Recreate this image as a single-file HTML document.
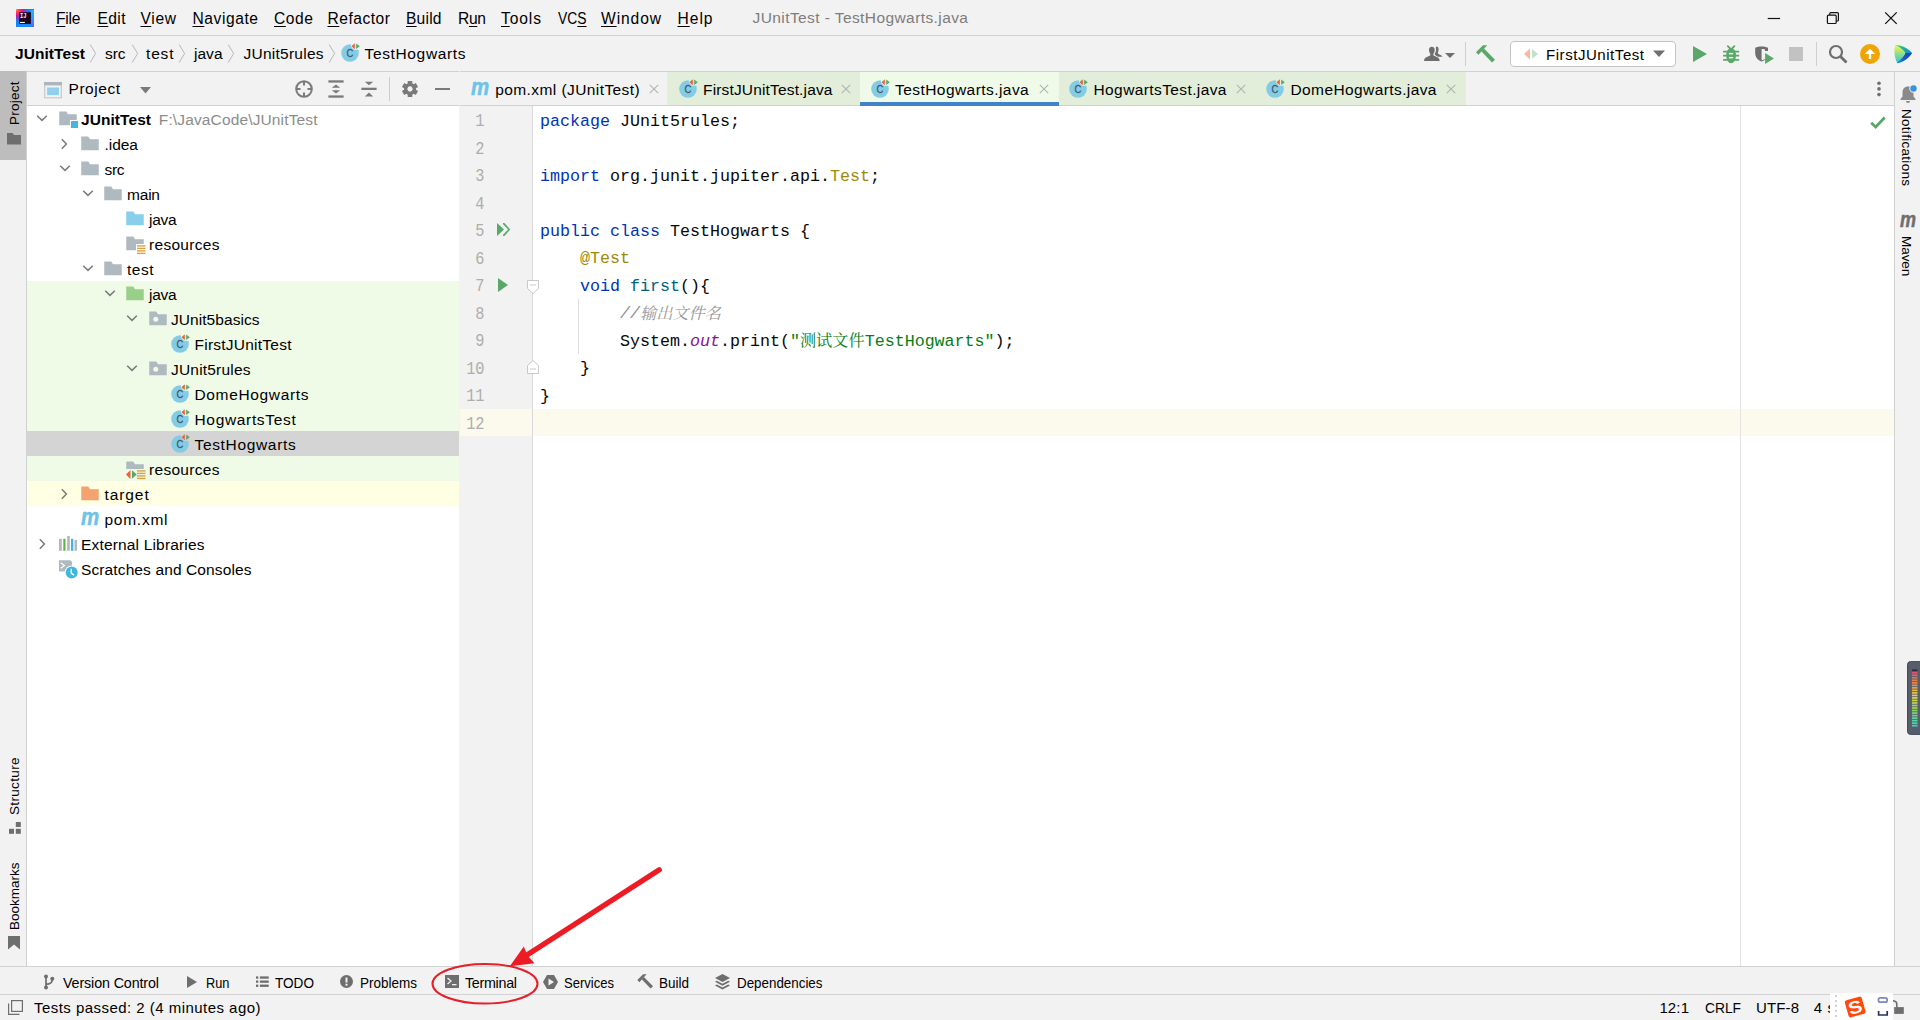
<!DOCTYPE html>
<html><head><meta charset="utf-8"><title>JUnitTest - TestHogwarts.java</title>
<style>
*{box-sizing:border-box;margin:0;padding:0}
html,body{width:1920px;height:1020px;overflow:hidden;background:#f2f2f2}
body{font-family:"Liberation Sans","Noto Sans CJK SC",sans-serif;font-size:15.5px;color:#000;position:relative}
.abs{position:absolute}
.t{position:absolute;white-space:nowrap;line-height:20px}
.hl{position:absolute;height:1px;background:#d1d1d1}
.vl{position:absolute;width:1px;background:#d1d1d1}
u{text-decoration:underline;text-underline-offset:2px;text-decoration-thickness:1px}
svg{position:absolute;overflow:visible}
.code{position:absolute;left:540px;font-family:"Liberation Mono","Noto Sans CJK SC",monospace;font-size:16.667px;line-height:27.5px;white-space:pre;color:#080808}
.ln{position:absolute;left:440px;width:44.500px;text-align:right;font-family:"Liberation Mono",monospace;font-size:18.2px;transform:scaleX(.84);transform-origin:100% 50%;line-height:27.5px;color:#adadad}
.k{color:#0033b3}.an{color:#9e880d}.fn{color:#00627a}.st{color:#067d17}.cm{color:#8c8c8c;font-style:italic}.fi{color:#871094;font-style:italic}
</style></head><body>
<!-- frame -->
<div class="hl" style="left:0;top:35px;width:1920px"></div>
<div class="hl" style="left:0;top:71px;width:1920px"></div>
<div class="abs" style="left:27px;top:106px;width:432px;height:860px;background:#fff"></div>
<div class="abs" style="left:533px;top:106px;width:1361px;height:860px;background:#fff"></div>
<div class="hl" style="left:27px;top:105px;width:1867px"></div>
<div class="abs" style="left:459px;top:71px;width:1px;height:35px;background:#f2f2f2"></div>
<div class="vl" style="left:26px;top:72px;height:894px"></div>
<div class="vl" style="left:1894px;top:72px;height:894px"></div>
<div class="vl" style="left:532px;top:106px;height:860px;background:#d9d9d9"></div>
<div class="vl" style="left:1740px;top:106px;height:860px;background:#e4e4e4"></div>
<div class="hl" style="left:0;top:966px;width:1920px"></div>
<div class="hl" style="left:0;top:994px;width:1920px"></div>
<!-- menu bar -->
<svg style="left:16px;top:9px" width="18" height="18" viewBox="0 0 18 18">
<defs><radialGradient id="ijg" cx="0" cy="0" r="1" gradientUnits="userSpaceOnUse" gradientTransform="translate(0.500 0.500) scale(12)"><stop offset="0" stop-color="#ff9a1e"/><stop offset=".22" stop-color="#ff3a6a"/><stop offset=".5" stop-color="#e0148a"/><stop offset=".8" stop-color="#7a3ad8" stop-opacity=".7"/><stop offset="1" stop-color="#157ffb" stop-opacity="0"/></radialGradient>
<linearGradient id="ijr" x1="0" y1="0" x2="0" y2="1"><stop offset="0" stop-color="#1fb8ff"/><stop offset=".6" stop-color="#3a90ff"/><stop offset="1" stop-color="#6a5cf6"/></linearGradient></defs>
<rect width="18" height="18" fill="#157ffb"/><rect x="14.500" y="1" width="3.500" height="17" fill="url(#ijr)"/><rect x="1" y="15" width="15" height="3" fill="#1a8afc"/>
<rect width="18" height="18" fill="url(#ijg)"/>
<rect x="3.200" y="3.200" width="11.700" height="11.700" fill="#1c0420"/>
<rect x="4" y="12.900" width="4.800" height="1.100" fill="#fff"/>
<text x="3.900" y="9" font-family="Liberation Mono,monospace" font-weight="bold" font-size="6.800" textLength="6.600" lengthAdjust="spacingAndGlyphs" fill="#fff">IJ</text></svg>
<span class="t" style="left:56px;top:9.3px;font-size:15.6px;line-height:20px;letter-spacing:-0.214px;"><u>F</u>ile</span>
<span class="t" style="left:97.5px;top:9.3px;font-size:15.6px;line-height:20px;letter-spacing:0.37px;"><u>E</u>dit</span>
<span class="t" style="left:140.5px;top:9.3px;font-size:15.6px;line-height:20px;letter-spacing:0.656px;"><u>V</u>iew</span>
<span class="t" style="left:192.5px;top:9.3px;font-size:15.6px;line-height:20px;letter-spacing:0.562px;"><u>N</u>avigate</span>
<span class="t" style="left:274px;top:9.3px;font-size:15.6px;line-height:20px;letter-spacing:0.568px;"><u>C</u>ode</span>
<span class="t" style="left:327.5px;top:9.3px;font-size:15.6px;line-height:20px;letter-spacing:0.507px;"><u>R</u>efactor</span>
<span class="t" style="left:406px;top:9.3px;font-size:15.6px;line-height:20px;letter-spacing:0.203px;"><u>B</u>uild</span>
<span class="t" style="left:458px;top:9.3px;font-size:15.6px;line-height:20px;letter-spacing:-0.32px;">R<u>u</u>n</span>
<span class="t" style="left:501px;top:9.3px;font-size:15.6px;line-height:20px;letter-spacing:0.898px;"><u>T</u>ools</span>
<span class="t" style="left:557.5px;top:9.3px;font-size:15.6px;line-height:20px;transform-origin:0 50%;transform:scaleX(0.8885);">VC<u>S</u></span>
<span class="t" style="left:601px;top:9.3px;font-size:15.6px;line-height:20px;letter-spacing:0.906px;"><u>W</u>indow</span>
<span class="t" style="left:677.5px;top:9.3px;font-size:15.6px;line-height:20px;letter-spacing:0.974px;"><u>H</u>elp</span>
<span class="t" style="left:752.5px;top:7.5px;font-size:15.5px;line-height:20px;color:#7d7d7d;letter-spacing:0.415px;">JUnitTest - TestHogwarts.java</span>
<svg style="left:1760px;top:8px" width="150" height="22" viewBox="1760 8 150 22" fill="none" stroke="#111" stroke-width="1.200">
<path d="M1767.700 18.500h12.400"/>
<rect x="1827.400" y="15.200" width="8.800" height="8.300" rx="1"/><path d="M1829.800 15v-1.400q0-.9.900-.9h6.800q.9 0 .9.900v6.500q0 .9-.9.900h-1.300"/>
<path d="M1885.200 12.400l11.500 11.500M1896.700 12.400l-11.500 11.500" stroke-width="1.300"/></svg>
<!-- navigation bar -->
<span class="t" style="left:15px;top:43.5px;font-size:15.5px;line-height:20px;font-weight:bold;letter-spacing:0.064px;">JUnitTest</span>
<span class="t" style="left:105px;top:43.5px;font-size:15.5px;line-height:20px;letter-spacing:-0.086px;">src</span>
<span class="t" style="left:146px;top:43.5px;font-size:15.5px;line-height:20px;letter-spacing:0.839px;">test</span>
<span class="t" style="left:194px;top:43.5px;font-size:15.5px;line-height:20px;letter-spacing:0.021px;">java</span>
<span class="t" style="left:243.5px;top:43.5px;font-size:15.5px;line-height:20px;letter-spacing:0.247px;">JUnit5rules</span>
<span class="t" style="left:364.5px;top:43.5px;font-size:15.5px;line-height:20px;letter-spacing:0.645px;">TestHogwarts</span>
<svg style="left:88.5px;top:44px" width="8" height="19" viewBox="0 0 8 19"><path d="M1.2 0.5l5.4 9-5.4 9" fill="none" stroke="#b3b9be" stroke-width="1"/></svg>
<svg style="left:130.5px;top:44px" width="8" height="19" viewBox="0 0 8 19"><path d="M1.2 0.5l5.4 9-5.4 9" fill="none" stroke="#b3b9be" stroke-width="1"/></svg>
<svg style="left:178px;top:44px" width="8" height="19" viewBox="0 0 8 19"><path d="M1.2 0.5l5.4 9-5.4 9" fill="none" stroke="#b3b9be" stroke-width="1"/></svg>
<svg style="left:227px;top:44px" width="8" height="19" viewBox="0 0 8 19"><path d="M1.2 0.5l5.4 9-5.4 9" fill="none" stroke="#b3b9be" stroke-width="1"/></svg>
<svg style="left:328px;top:44px" width="8" height="19" viewBox="0 0 8 19"><path d="M1.2 0.5l5.4 9-5.4 9" fill="none" stroke="#b3b9be" stroke-width="1"/></svg>
<svg style="left:340.2px;top:42.8px" width="20" height="20" viewBox="0 0 20 20"><circle cx="10" cy="10" r="8.800" fill="#84cbe6"/><text x="0" y="14" text-anchor="middle" transform="translate(9.900 0) scale(.860 1)" font-family="Liberation Sans,sans-serif" font-size="11" fill="#3d5564" stroke="#3d5564" stroke-width="0.250">C</text><path d="M11 -0.5h9.5v7.2h-6.5l-3-3z" fill="#f2f2f2"/><path d="M14.8 0.2v6l-3.4-3z" fill="#e8623c"/><path d="M16.2 0.4v5.6l3.6-2.8z" fill="#59a869"/></svg>
<!-- run toolbar -->
<svg style="left:1422px;top:44px" width="36" height="20" viewBox="1422 44 36 20">
<path d="M1436.500 46.400c1.600 0 2.300 1.300 2.100 3.200-.2 1.700-.8 2.800-.7 3.600.1.900 1.700 1.300 3.200 2.100.8.500 1.200 1 1.300 1.500h-4.500c-.9-.8-2.400-1.300-3-2-.300-.5 0-1.200.4-2 .7-1.300 1-3 .6-4.500-.1-.8.100-1.900.6-1.900z" fill="#6e6e6e"/>
<path d="M1431.800 46.800c2 0 3 1.500 2.900 3.500-.1 1.600-.9 2.900-1.300 3.700-.3.700-.2 1.300.6 1.700 1.500.8 4 1.300 5 2.700.5.700.6 1.600.6 2.500h-15.500c0-.9.100-1.800.6-2.500 1-1.400 3.500-1.900 5-2.700.8-.4.900-1 .6-1.700-.4-.8-1.200-2.100-1.300-3.700-.1-2 .9-3.500 2.800-3.500z" fill="#6e6e6e"/>
<path d="M1445 53h10l-5 5z" fill="#6e6e6e"/></svg>
<div class="vl" style="left:1465px;top:42px;height:24px;background:#cfcfcf"></div>
<svg style="left:1475px;top:44px" width="20" height="20" viewBox="1475 44 20 20" fill="#59a869">
<path d="M1476 52.200l7-6.900h4.200l-8.700 9.500z"/><path d="M1481.300 51.200l2.700-2.700 11 11.200-3 2.800z"/></svg>
<div class="abs" style="left:1510px;top:41px;width:166px;height:26px;background:#fff;border:1px solid #c4c4c4;border-radius:4px"></div>
<svg style="left:1523px;top:46px" width="16" height="16" viewBox="0 0 16 16">
<path d="M7 2.500v11l-6-5.500z" fill="#f4b9a6"/><path d="M9 3v10l6-5z" fill="#c3e0c6"/></svg>
<span class="t" style="left:1546px;top:44.9px;font-size:15.0px;line-height:20px;letter-spacing:0.55px;">FirstJUnitTest</span>
<svg style="left:1653px;top:50px" width="12" height="8" viewBox="0 0 12 8"><path d="M0 0.500h12l-6 6.500z" fill="#6e6e6e"/></svg>
<svg style="left:1692px;top:45px" width="16" height="18" viewBox="0 0 16 18"><path d="M1 1l14 8-14 8z" fill="#59a869"/></svg>
<svg style="left:1721px;top:44px" width="20" height="20" viewBox="1721 44 20 20">
<ellipse cx="1731.100" cy="55.600" rx="4.900" ry="7.600" fill="#59a869"/>
<path d="M1723.800 51.700h14.600M1723.800 55.700h14.600M1723.800 59.800h14.600M1727.800 46.200l3.300 3.300 3.300-3.300" stroke="#59a869" stroke-width="1.800" stroke-linecap="round" fill="none"/>
<rect x="1728.900" y="52.900" width="4.300" height="1.500" fill="#f2f2f2"/><rect x="1728.900" y="56.900" width="4.300" height="1.500" fill="#f2f2f2"/></svg>
<svg style="left:1755px;top:44px" width="20" height="20" viewBox="1755 44 20 20">
<path d="M1755.200 47.800c2-1 4-1.300 6.300-1.300s4.500.3 6.500 1.300v3.200h-3v8c0 1.300-1.500 2-3.500 2.500-3.500-1.200-6.300-4.200-6.300-8.500z" fill="#6e6e6e"/>
<path d="M1761.600 49c1 0 2.200.1 3.400.5v9.300c-.9.700-2 1.200-3.400 1.600z" fill="#f2f2f2"/>
<path d="M1765.100 52.900l8.800 5.500-8.800 5.500z" fill="#59a869"/></svg>
<div class="abs" style="left:1789px;top:47px;width:14px;height:14px;background:#c2c2c2"></div>
<div class="vl" style="left:1816px;top:42px;height:24px;background:#cfcfcf"></div>
<svg style="left:1828px;top:44px" width="20" height="20" viewBox="0 0 20 20"><circle cx="8" cy="8" r="6" fill="none" stroke="#6e6e6e" stroke-width="2.200"/><path d="M12.500 12.500l6 6" stroke="#6e6e6e" stroke-width="2.800"/></svg>
<svg style="left:1860px;top:44px" width="20" height="20" viewBox="0 0 20 20"><circle cx="10" cy="10" r="10" fill="#efa506"/><path d="M10 4.800l5.200 5.300h-4v5h-2.400v-5h-4z" fill="#fff"/></svg>
<svg style="left:1893px;top:44px" width="20" height="20" viewBox="1893 44 20 20">
<defs><linearGradient id="lgA" x1="0" y1="0" x2="0" y2="1"><stop offset="0" stop-color="#f6f84a"/><stop offset=".5" stop-color="#8fdc8a"/><stop offset="1" stop-color="#1fc3dc"/></linearGradient>
<linearGradient id="lgB" x1="0" y1="0" x2="1" y2="1"><stop offset="0" stop-color="#3fe04a"/><stop offset=".5" stop-color="#1fb09a"/><stop offset="1" stop-color="#1a84e6"/></linearGradient>
<linearGradient id="lgC" x1="1" y1="0" x2="0" y2="1"><stop offset="0" stop-color="#1c3fa8"/><stop offset=".6" stop-color="#1560c8"/><stop offset="1" stop-color="#10a0e8"/></linearGradient></defs>
<path d="M1895.200 44.900c7.500.3 13.500 3.600 16.900 8.100h-6.800c-2.300-3.600-6-6.300-10.100-8.100z" fill="url(#lgB)"/>
<path d="M1905.300 53h6.800c-3 5-8 8.800-14.800 10.300l-.5-1.300c3.800-2.300 6.800-5.300 8.500-9z" fill="url(#lgC)"/>
<path d="M1895.200 44.900c4.100 1.800 7.800 4.500 10.100 8.100-1.700 3.700-4.700 6.700-8.500 9l.5 1.300c-2.800-5.800-3.800-12-2.100-18.400z" fill="url(#lgA)"/></svg>
<!-- project tool window header -->
<svg style="left:44px;top:81.500px" width="18" height="16.500" viewBox="0 0 18 16.500">
<rect x="0" y="0" width="18" height="16.400" fill="#c7ced3"/><rect x="1.300" y="3.300" width="15.400" height="11.800" fill="#f1f3f4"/><rect x="0" y="0" width="18" height="3.300" fill="#adb6bd"/><rect x="3.100" y="5.500" width="11.900" height="7.600" fill="#90d0ec"/></svg>
<span class="t" style="left:68.5px;top:79.1px;font-size:15.5px;line-height:20px;letter-spacing:0.542px;">Project</span>
<svg style="left:139.500px;top:87px" width="11" height="7" viewBox="0 0 11 7"><path d="M0 0h11l-5.500 6.500z" fill="#7a7a7a"/></svg>
<svg style="left:294px;top:79px" width="20" height="20" viewBox="0 0 20 20" fill="none" stroke="#7a7a7a" stroke-width="2">
<circle cx="10" cy="10" r="7.800"/><path d="M10 2v4.500M10 18v-4.500M2 10h4.500M18 10h-4.500"/></svg>
<svg style="left:326px;top:79px" width="20" height="20" viewBox="0 0 20 20" fill="#7a7a7a">
<rect x="2.400" y="1.300" width="15.200" height="2.300"/><rect x="2.400" y="16.400" width="15.200" height="2.300"/>
<path d="M10 5.500l4.200 3.200h-8.400zM10 14.500l4.200-3.200h-8.400z"/></svg>
<svg style="left:359px;top:79px" width="20" height="20" viewBox="0 0 20 20" fill="#7a7a7a">
<rect x="2.400" y="8.700" width="15.200" height="2.300"/>
<path d="M10 6.200l4.200-3.500h-8.400zM10 13.600l4.200 3.900h-8.400z"/></svg>
<div class="vl" style="left:389px;top:77px;height:24px;background:#cdcdcd"></div>
<svg style="left:400px;top:79px" width="20" height="20" viewBox="-10 -10 20 20" fill="#7a7a7a">
<path fill-rule="evenodd" d="M0 -6a6 6 0 1 0 .01 0zM0 -2.700a2.700 2.700 0 1 1 -.01 0z"/><rect x="-2.300" y="-8" width="4.600" height="5" transform="rotate(0)"/><rect x="-2.300" y="-8" width="4.600" height="5" transform="rotate(60)"/><rect x="-2.300" y="-8" width="4.600" height="5" transform="rotate(120)"/><rect x="-2.300" y="-8" width="4.600" height="5" transform="rotate(180)"/><rect x="-2.300" y="-8" width="4.600" height="5" transform="rotate(240)"/><rect x="-2.300" y="-8" width="4.600" height="5" transform="rotate(300)"/></svg>
<div class="abs" style="left:435.200px;top:87.600px;width:15.200px;height:2.300px;background:#7a7a7a"></div>
<!-- editor tabs -->
<div class="abs" style="left:667px;top:72px;width:193px;height:33px;background:#e2eeda"></div>
<div class="abs" style="left:1059px;top:72px;width:407px;height:33px;background:#e2eeda"></div>
<div class="abs" style="left:860px;top:72px;width:199px;height:33px;background:#f0fae9"></div>
<div class="abs" style="left:860px;top:102px;width:199px;height:4px;background:#4083c9"></div>
<svg style="left:470.7px;top:82.7px" width="18.2" height="12" viewBox="0 0 18.2 12"><text x="0" y="12" font-family="Liberation Sans,sans-serif" font-style="italic" font-weight="bold" font-size="23.12" textLength="18.2" lengthAdjust="spacingAndGlyphs" fill="#6ec3e8" stroke="#6ec3e8" stroke-width="0.500">m</text></svg>
<span class="t" style="left:495.2px;top:80.1px;font-size:15.5px;line-height:20px;letter-spacing:0.42px;">pom.xml (JUnitTest)</span>
<svg style="left:649px;top:84.2px" width="10" height="10" viewBox="-5 -5 10 10"><path d="M-4.2 -4.2l8.4 8.4M4.2 -4.2l-8.4 8.4" stroke="#b2b2b2" stroke-width="1.1" fill="none"/></svg>
<svg style="left:678px;top:78.5px" width="20" height="20" viewBox="0 0 20 20"><circle cx="10" cy="10" r="8.800" fill="#84cbe6"/><text x="0" y="14" text-anchor="middle" transform="translate(9.900 0) scale(.860 1)" font-family="Liberation Sans,sans-serif" font-size="11" fill="#3d5564" stroke="#3d5564" stroke-width="0.250">C</text><path d="M11 -0.5h9.5v7.2h-6.5l-3-3z" fill="#e2eeda"/><path d="M14.8 0.2v6l-3.4-3z" fill="#e8623c"/><path d="M16.2 0.4v5.6l3.6-2.8z" fill="#59a869"/></svg>
<span class="t" style="left:703px;top:80.1px;font-size:15.5px;line-height:20px;letter-spacing:0.16px;">FirstJUnitTest.java</span>
<svg style="left:841px;top:84.2px" width="10" height="10" viewBox="-5 -5 10 10"><path d="M-4.2 -4.2l8.4 8.4M4.2 -4.2l-8.4 8.4" stroke="#b2b2b2" stroke-width="1.1" fill="none"/></svg>
<svg style="left:870px;top:78.5px" width="20" height="20" viewBox="0 0 20 20"><circle cx="10" cy="10" r="8.800" fill="#84cbe6"/><text x="0" y="14" text-anchor="middle" transform="translate(9.900 0) scale(.860 1)" font-family="Liberation Sans,sans-serif" font-size="11" fill="#3d5564" stroke="#3d5564" stroke-width="0.250">C</text><path d="M11 -0.5h9.5v7.2h-6.5l-3-3z" fill="#f0fae9"/><path d="M14.8 0.2v6l-3.4-3z" fill="#e8623c"/><path d="M16.2 0.4v5.6l3.6-2.8z" fill="#59a869"/></svg>
<span class="t" style="left:895px;top:80.1px;font-size:15.5px;line-height:20px;letter-spacing:0.441px;">TestHogwarts.java</span>
<svg style="left:1039px;top:84.2px" width="10" height="10" viewBox="-5 -5 10 10"><path d="M-4.2 -4.2l8.4 8.4M4.2 -4.2l-8.4 8.4" stroke="#b2b2b2" stroke-width="1.1" fill="none"/></svg>
<svg style="left:1068px;top:78.5px" width="20" height="20" viewBox="0 0 20 20"><circle cx="10" cy="10" r="8.800" fill="#84cbe6"/><text x="0" y="14" text-anchor="middle" transform="translate(9.900 0) scale(.860 1)" font-family="Liberation Sans,sans-serif" font-size="11" fill="#3d5564" stroke="#3d5564" stroke-width="0.250">C</text><path d="M11 -0.5h9.5v7.2h-6.5l-3-3z" fill="#e2eeda"/><path d="M14.8 0.2v6l-3.4-3z" fill="#e8623c"/><path d="M16.2 0.4v5.6l3.6-2.8z" fill="#59a869"/></svg>
<span class="t" style="left:1093.5px;top:80.1px;font-size:15.5px;line-height:20px;letter-spacing:0.397px;">HogwartsTest.java</span>
<svg style="left:1236px;top:84.2px" width="10" height="10" viewBox="-5 -5 10 10"><path d="M-4.2 -4.2l8.4 8.4M4.2 -4.2l-8.4 8.4" stroke="#b2b2b2" stroke-width="1.1" fill="none"/></svg>
<svg style="left:1265px;top:78.5px" width="20" height="20" viewBox="0 0 20 20"><circle cx="10" cy="10" r="8.800" fill="#84cbe6"/><text x="0" y="14" text-anchor="middle" transform="translate(9.900 0) scale(.860 1)" font-family="Liberation Sans,sans-serif" font-size="11" fill="#3d5564" stroke="#3d5564" stroke-width="0.250">C</text><path d="M11 -0.5h9.5v7.2h-6.5l-3-3z" fill="#e2eeda"/><path d="M14.8 0.2v6l-3.4-3z" fill="#e8623c"/><path d="M16.2 0.4v5.6l3.6-2.8z" fill="#59a869"/></svg>
<span class="t" style="left:1290.5px;top:80.1px;font-size:15.5px;line-height:20px;letter-spacing:0.402px;">DomeHogwarts.java</span>
<svg style="left:1446px;top:84.2px" width="10" height="10" viewBox="-5 -5 10 10"><path d="M-4.2 -4.2l8.4 8.4M4.2 -4.2l-8.4 8.4" stroke="#b2b2b2" stroke-width="1.1" fill="none"/></svg>
<svg style="left:1877px;top:81px" width="4" height="17" viewBox="0 0 4 17" fill="#6e6e6e"><circle cx="2" cy="2.200" r="1.800"/><circle cx="2" cy="7.900" r="1.800"/><circle cx="2" cy="13.600" r="1.800"/></svg>
<!-- project tree -->
<div class="abs" style="left:27px;top:281px;width:432px;height:200px;background:#effae7"></div>
<div class="abs" style="left:27px;top:431px;width:432px;height:25px;background:#d4d4d4"></div>
<div class="abs" style="left:27px;top:481px;width:432px;height:25px;background:#ffffe4"></div>
<svg style="left:34.8px;top:113px" width="14" height="10" viewBox="-7 -5 14 10"><path d="M-4.8 -2.2l4.8 4.6 4.8-4.6" fill="none" stroke="#7a7a7a" stroke-width="1.5"/></svg>
<svg style="left:58px;top:109.1px" width="20" height="20" viewBox="0 0 16 16"><path d="M1 2h5.6l1.4 2.2h7v8.8h-14z" fill="#aeb9c0"/></svg>
<div class="abs" style="left:69.5px;top:119.89999999999999px;width:9.500px;height:9.500px;background:#fff"></div>
<div class="abs" style="left:70.5px;top:120.89999999999999px;width:7.500px;height:7.500px;background:#40b6e0"></div>
<span class="t" style="left:81px;top:109.7px;font-size:15.5px;line-height:20px;font-weight:bold;letter-spacing:0.064px;">JUnitTest</span>
<span class="t" style="left:158.8px;top:109.7px;font-size:15.5px;line-height:20px;color:#8c8c8c;letter-spacing:0.138px;">F:\JavaCode\JUnitTest</span>
<svg style="left:59.0px;top:136.5px" width="10" height="14" viewBox="-5 -7 10 14"><path d="M-2.2 -4.8l4.6 4.8-4.6 4.8" fill="none" stroke="#7a7a7a" stroke-width="1.5"/></svg>
<svg style="left:80px;top:134.1px" width="20" height="20" viewBox="0 0 16 16"><path d="M1 2h5.6l1.4 2.2h7v8.8h-14z" fill="#aeb9c0"/></svg>
<span class="t" style="left:104.5px;top:134.7px;font-size:15.5px;line-height:20px;letter-spacing:-0.031px;">.idea</span>
<svg style="left:58.2px;top:163px" width="14" height="10" viewBox="-7 -5 14 10"><path d="M-4.8 -2.2l4.8 4.6 4.8-4.6" fill="none" stroke="#7a7a7a" stroke-width="1.5"/></svg>
<svg style="left:80px;top:159.1px" width="20" height="20" viewBox="0 0 16 16"><path d="M1 2h5.6l1.4 2.2h7v8.8h-14z" fill="#aeb9c0"/></svg>
<span class="t" style="left:104.5px;top:159.7px;font-size:15.5px;line-height:20px;letter-spacing:-0.336px;">src</span>
<svg style="left:80.5px;top:188px" width="14" height="10" viewBox="-7 -5 14 10"><path d="M-4.8 -2.2l4.8 4.6 4.8-4.6" fill="none" stroke="#7a7a7a" stroke-width="1.5"/></svg>
<svg style="left:102.7px;top:184.1px" width="20" height="20" viewBox="0 0 16 16"><path d="M1 2h5.6l1.4 2.2h7v8.8h-14z" fill="#aeb9c0"/></svg>
<span class="t" style="left:127px;top:184.7px;font-size:15.5px;line-height:20px;letter-spacing:-0.203px;">main</span>
<svg style="left:125px;top:209.1px" width="20" height="20" viewBox="0 0 16 16"><path d="M1 2h5.6l1.4 2.2h7v8.8h-14z" fill="#87cfea"/></svg>
<span class="t" style="left:149px;top:209.7px;font-size:15.5px;line-height:20px;letter-spacing:-0.312px;">java</span>
<svg style="left:125px;top:234.1px" width="20" height="20" viewBox="0 0 16 16"><path d="M1 2h5.6l1.4 2.2h7v8.8h-14z" fill="#aeb9c0"/></svg>
<div class="abs" style="left:135.5px;top:243.79999999999998px;width:10.500px;height:11px;background:#fff"></div>
<svg style="left:136.8px;top:244.79999999999998px" width="8.500" height="9.500" viewBox="0 0 8.500 9.500" fill="#d9a343"><rect x="0" y="0.200" width="8.500" height="1.400"/><rect x="0" y="2.700" width="8.500" height="1.400"/><rect x="0" y="5.200" width="8.500" height="1.400"/><rect x="0" y="7.700" width="8.500" height="1.400"/></svg>
<span class="t" style="left:149px;top:234.7px;font-size:15.5px;line-height:20px;letter-spacing:0.305px;">resources</span>
<svg style="left:80.5px;top:263px" width="14" height="10" viewBox="-7 -5 14 10"><path d="M-4.8 -2.2l4.8 4.6 4.8-4.6" fill="none" stroke="#7a7a7a" stroke-width="1.5"/></svg>
<svg style="left:102.7px;top:259.1px" width="20" height="20" viewBox="0 0 16 16"><path d="M1 2h5.6l1.4 2.2h7v8.8h-14z" fill="#aeb9c0"/></svg>
<span class="t" style="left:127px;top:259.7px;font-size:15.5px;line-height:20px;letter-spacing:0.505px;">test</span>
<svg style="left:103px;top:288px" width="14" height="10" viewBox="-7 -5 14 10"><path d="M-4.8 -2.2l4.8 4.6 4.8-4.6" fill="none" stroke="#7a7a7a" stroke-width="1.5"/></svg>
<svg style="left:125px;top:284.1px" width="20" height="20" viewBox="0 0 16 16"><path d="M1 2h5.6l1.4 2.2h7v8.8h-14z" fill="#98d08a"/></svg>
<span class="t" style="left:149px;top:284.7px;font-size:15.5px;line-height:20px;letter-spacing:-0.312px;">java</span>
<svg style="left:125.30000000000001px;top:313px" width="14" height="10" viewBox="-7 -5 14 10"><path d="M-4.8 -2.2l4.8 4.6 4.8-4.6" fill="none" stroke="#7a7a7a" stroke-width="1.5"/></svg>
<svg style="left:147.7px;top:309.1px" width="20" height="20" viewBox="0 0 16 16"><path d="M1 2h5.600l1.400 2.200h7v8.800h-14z" fill="#aeb9c0"/><circle cx="6.200" cy="8.100" r="2" fill="#effae7"/></svg>
<span class="t" style="left:171px;top:309.7px;font-size:15.5px;line-height:20px;letter-spacing:0.057px;">JUnit5basics</span>
<svg style="left:170px;top:334px" width="20" height="20" viewBox="0 0 20 20"><circle cx="10" cy="10" r="8.800" fill="#84cbe6"/><text x="0" y="14" text-anchor="middle" transform="translate(9.900 0) scale(.860 1)" font-family="Liberation Sans,sans-serif" font-size="11" fill="#3d5564" stroke="#3d5564" stroke-width="0.250">C</text><path d="M11 -0.5h9.5v7.2h-6.5l-3-3z" fill="#effae7"/><path d="M14.8 0.2v6l-3.4-3z" fill="#e8623c"/><path d="M16.2 0.4v5.6l3.6-2.8z" fill="#59a869"/></svg>
<span class="t" style="left:194.5px;top:334.7px;font-size:15.5px;line-height:20px;letter-spacing:0.24px;">FirstJUnitTest</span>
<svg style="left:125.30000000000001px;top:363px" width="14" height="10" viewBox="-7 -5 14 10"><path d="M-4.8 -2.2l4.8 4.6 4.8-4.6" fill="none" stroke="#7a7a7a" stroke-width="1.5"/></svg>
<svg style="left:147.7px;top:359.1px" width="20" height="20" viewBox="0 0 16 16"><path d="M1 2h5.600l1.400 2.200h7v8.800h-14z" fill="#aeb9c0"/><circle cx="6.200" cy="8.100" r="2" fill="#effae7"/></svg>
<span class="t" style="left:171px;top:359.7px;font-size:15.5px;line-height:20px;letter-spacing:0.197px;">JUnit5rules</span>
<svg style="left:170px;top:384px" width="20" height="20" viewBox="0 0 20 20"><circle cx="10" cy="10" r="8.800" fill="#84cbe6"/><text x="0" y="14" text-anchor="middle" transform="translate(9.900 0) scale(.860 1)" font-family="Liberation Sans,sans-serif" font-size="11" fill="#3d5564" stroke="#3d5564" stroke-width="0.250">C</text><path d="M11 -0.5h9.5v7.2h-6.5l-3-3z" fill="#effae7"/><path d="M14.8 0.2v6l-3.4-3z" fill="#e8623c"/><path d="M16.2 0.4v5.6l3.6-2.8z" fill="#59a869"/></svg>
<span class="t" style="left:194.5px;top:384.7px;font-size:15.5px;line-height:20px;letter-spacing:0.653px;">DomeHogwarts</span>
<svg style="left:170px;top:409px" width="20" height="20" viewBox="0 0 20 20"><circle cx="10" cy="10" r="8.800" fill="#84cbe6"/><text x="0" y="14" text-anchor="middle" transform="translate(9.900 0) scale(.860 1)" font-family="Liberation Sans,sans-serif" font-size="11" fill="#3d5564" stroke="#3d5564" stroke-width="0.250">C</text><path d="M11 -0.5h9.5v7.2h-6.5l-3-3z" fill="#effae7"/><path d="M14.8 0.2v6l-3.4-3z" fill="#e8623c"/><path d="M16.2 0.4v5.6l3.6-2.8z" fill="#59a869"/></svg>
<span class="t" style="left:194.5px;top:409.7px;font-size:15.5px;line-height:20px;letter-spacing:0.663px;">HogwartsTest</span>
<svg style="left:170px;top:434px" width="20" height="20" viewBox="0 0 20 20"><circle cx="10" cy="10" r="8.800" fill="#84cbe6"/><text x="0" y="14" text-anchor="middle" transform="translate(9.900 0) scale(.860 1)" font-family="Liberation Sans,sans-serif" font-size="11" fill="#3d5564" stroke="#3d5564" stroke-width="0.250">C</text><path d="M11 -0.5h9.5v7.2h-6.5l-3-3z" fill="#d4d4d4"/><path d="M14.8 0.2v6l-3.4-3z" fill="#e8623c"/><path d="M16.2 0.4v5.6l3.6-2.8z" fill="#59a869"/></svg>
<span class="t" style="left:194.5px;top:434.7px;font-size:15.5px;line-height:20px;letter-spacing:0.663px;">TestHogwarts</span>
<svg style="left:125px;top:459.1px" width="20" height="20" viewBox="0 0 16 16"><path d="M1 2h5.6l1.4 2.2h7v8.8h-14z" fill="#aeb9c0"/></svg>
<div class="abs" style="left:125px;top:468.8px;width:21px;height:11px;background:#effae7"></div>
<svg style="left:136.8px;top:469.8px" width="8.500" height="9.500" viewBox="0 0 8.500 9.500" fill="#d9a343"><rect x="0" y="0.200" width="8.500" height="1.400"/><rect x="0" y="2.700" width="8.500" height="1.400"/><rect x="0" y="5.200" width="8.500" height="1.400"/><rect x="0" y="7.700" width="8.500" height="1.400"/></svg>
<svg style="left:125.5px;top:469.6px" width="11" height="9" viewBox="0 0 11 9"><path d="M4.500 0v9l-4.500-4.500z" fill="#e8623c"/><path d="M6 0.300v8.400l4.800-4.200z" fill="#59a869"/></svg>
<span class="t" style="left:149px;top:459.7px;font-size:15.5px;line-height:20px;letter-spacing:0.305px;">resources</span>
<svg style="left:59.0px;top:486.5px" width="10" height="14" viewBox="-5 -7 10 14"><path d="M-2.2 -4.8l4.6 4.8-4.6 4.8" fill="none" stroke="#7a7a7a" stroke-width="1.5"/></svg>
<svg style="left:80px;top:484.1px" width="20" height="20" viewBox="0 0 16 16"><path d="M1 2h5.6l1.4 2.2h7v8.8h-14z" fill="#f4a26f"/></svg>
<span class="t" style="left:104.5px;top:484.7px;font-size:15.5px;line-height:20px;letter-spacing:0.912px;">target</span>
<svg style="left:80.7px;top:512.7px" width="18.2" height="12" viewBox="0 0 18.2 12"><text x="0" y="12" font-family="Liberation Sans,sans-serif" font-style="italic" font-weight="bold" font-size="23.12" textLength="18.2" lengthAdjust="spacingAndGlyphs" fill="#6ec3e8" stroke="#6ec3e8" stroke-width="0.500">m</text></svg>
<span class="t" style="left:104.5px;top:509.7px;font-size:15.5px;line-height:20px;letter-spacing:0.737px;">pom.xml</span>
<svg style="left:36.5px;top:536.5px" width="10" height="14" viewBox="-5 -7 10 14"><path d="M-2.2 -4.8l4.6 4.8-4.6 4.8" fill="none" stroke="#7a7a7a" stroke-width="1.5"/></svg>
<svg style="left:58px;top:534px" width="20" height="20" viewBox="0 0 20 20">
<rect x="1" y="4.800" width="2.800" height="12" fill="#aeb9c0"/><rect x="5.300" y="4.800" width="2.200" height="12" fill="#62b543"/>
<rect x="9.200" y="2" width="2.600" height="14.800" fill="#aeb9c0"/><rect x="13" y="4.800" width="2.300" height="12" fill="#40b6e0"/><rect x="16.500" y="6" width="2.500" height="10.800" fill="#aeb9c0"/></svg>
<span class="t" style="left:81px;top:534.7px;font-size:15.5px;line-height:20px;letter-spacing:0.17px;">External Libraries</span>
<svg style="left:58px;top:559px" width="22" height="22" viewBox="0 0 22 22">
<path d="M1 1.300h11.500l1.500 1.500v9.700h-13z" fill="#aeb9c0"/><path d="M2.800 3.800l3.600 2.700-3.600 2.700" fill="none" stroke="#fff" stroke-width="1.200"/>
<circle cx="13.700" cy="13.500" r="7" fill="#fff"/><circle cx="13.700" cy="13.500" r="6" fill="#40b6e0"/><path d="M13.200 9.800v4.400l2.800 1.900" fill="none" stroke="#fff" stroke-width="1.400"/></svg>
<span class="t" style="left:81px;top:559.7px;font-size:15.5px;line-height:20px;letter-spacing:0.118px;">Scratches and Consoles</span>
<!-- editor -->
<div class="abs" style="left:460px;top:409px;width:72px;height:27px;background:#fcfaed"></div>
<div class="abs" style="left:533px;top:409px;width:1207px;height:27px;background:#fcfaed"></div>
<div class="abs" style="left:1741px;top:409px;width:153px;height:27px;background:#fcfaed"></div>
<div class="vl" style="left:578px;top:299px;height:55px;background:#dcdcdc"></div>
<div class="ln" style="top:108.1px">1</div>
<div class="code" style="top:107.6px"><span class="k">package</span> JUnit5rules;</div>
<div class="ln" style="top:135.6px">2</div>
<div class="ln" style="top:163.1px">3</div>
<div class="code" style="top:162.6px"><span class="k">import</span> org.junit.jupiter.api.<span class="an">Test</span>;</div>
<div class="ln" style="top:190.6px">4</div>
<div class="ln" style="top:218.1px">5</div>
<div class="code" style="top:217.6px"><span class="k">public class</span> TestHogwarts {</div>
<div class="ln" style="top:245.6px">6</div>
<div class="code" style="top:245.1px">    <span class="an">@Test</span></div>
<div class="ln" style="top:273.1px">7</div>
<div class="code" style="top:272.6px">    <span class="k">void</span> <span class="fn">first</span>(){</div>
<div class="ln" style="top:300.6px">8</div>
<div class="code" style="top:300.1px">        <span class="cm">//<span style="font-family:'Noto Serif CJK SC',serif;font-size:16.200px;line-height:0;position:relative;top:1px;color:#969696">输出文件名</span></span></div>
<div class="ln" style="top:328.1px">9</div>
<div class="code" style="top:327.6px">        System.<span class="fi">out</span>.print(<span class="st">"<span style="font-family:'Noto Serif CJK SC',serif;font-size:16.200px;line-height:0">测试文件</span>TestHogwarts"</span>);</div>
<div class="ln" style="top:355.6px">10</div>
<div class="code" style="top:355.1px">    }</div>
<div class="ln" style="top:383.1px">11</div>
<div class="code" style="top:382.6px">}</div>
<div class="ln" style="top:410.6px">12</div>
<svg style="left:496.800px;top:223px" width="14" height="13" viewBox="0 0 14 13" fill="#59a869"><path d="M0 0l7 6.500-7 6.500z"/><path d="M6 0h1.400l5.800 6.500-5.800 6.500h-1.400v-1.200l5.200-5.300-5.200-5.300z"/></svg>
<svg style="left:498px;top:277.700px" width="10" height="14" viewBox="0 0 10 14" fill="#59a869"><path d="M0 0l10 7-10 7z"/></svg>
<svg style="left:526.500px;top:280px" width="12" height="14" viewBox="0 0 12 14"><path d="M0.500 0.500h11v8l-5.500 5-5.500-5z" fill="#fff" stroke="#c9c9c9" stroke-width="1"/><path d="M3 5h6" stroke="#c9c9c9" stroke-width="1"/></svg>
<svg style="left:526.500px;top:360px" width="12" height="14" viewBox="0 0 12 14"><path d="M0.500 13.500h11v-8l-5.500-5-5.500 5z" fill="#fff" stroke="#c9c9c9" stroke-width="1"/><path d="M3 9h6" stroke="#c9c9c9" stroke-width="1"/></svg>
<svg style="left:1870px;top:116px" width="16" height="13" viewBox="0 0 16 13"><path d="M1.200 6.800l4.500 4.200 9-9.500" fill="none" stroke="#59a869" stroke-width="2.800"/></svg>
<!-- left tool strip -->
<div class="abs" style="left:0;top:71px;width:26px;height:89px;background:#bdbdbd"></div>
<span class="t" style="left:5.199999999999999px;top:124.5px;font-size:13.5px;line-height:20px;letter-spacing:0.245px;transform-origin:0 0;transform:rotate(-90deg);">Project</span>
<svg style="left:7px;top:132.500px" width="14" height="12" viewBox="0 0 14 12"><path d="M0 0h5.500l1.500 2h7v9.500h-14z" fill="#6e6e6e"/></svg>
<span class="t" style="left:5.199999999999999px;top:814.5px;font-size:13.5px;line-height:20px;letter-spacing:0.34px;transform-origin:0 0;transform:rotate(-90deg);">Structure</span>
<svg style="left:8.500px;top:822px" width="12" height="12" viewBox="0 0 12 12" fill="#6e6e6e"><rect x="6.800" y="0" width="5" height="5"/><rect x="0" y="6.800" width="5" height="5"/><rect x="6.800" y="6.800" width="5" height="5"/></svg>
<span class="t" style="left:5.199999999999999px;top:930.0px;font-size:13.5px;line-height:20px;letter-spacing:-0.004px;transform-origin:0 0;transform:rotate(-90deg);">Bookmarks</span>
<svg style="left:8.200px;top:936px" width="12" height="14" viewBox="0 0 12 14"><path d="M0 0h12v13.500l-6-5-6 5z" fill="#6e6e6e"/></svg>
<!-- right tool strip -->
<svg style="left:1900px;top:84px" width="18" height="19" viewBox="0 0 18 19">
<path d="M8 2.500c3.500 0 5.500 2.600 5.500 6v4l2 2.500v1h-15v-1l2-2.500v-4c0-3.400 2-6 5.500-6z" fill="#8a8a8a"/><path d="M6 17h4a2 2 0 0 1-4 0z" fill="#8a8a8a"/>
<circle cx="13.500" cy="4.500" r="4.200" fill="#f2f2f2"/><circle cx="13.500" cy="4.500" r="3.200" fill="#3592e4"/></svg>
<span class="t" style="left:1916px;top:109.0px;font-size:13.5px;line-height:20px;letter-spacing:0.288px;transform-origin:0 0;transform:rotate(90deg);">Notifications</span>
<svg style="left:1900px;top:215.3px" width="16" height="11.5" viewBox="0 0 16 11.5"><text x="0" y="11.5" font-family="Liberation Sans,sans-serif" font-style="italic" font-weight="bold" font-size="22.16" textLength="16" lengthAdjust="spacingAndGlyphs" fill="#6e6e6e" stroke="#6e6e6e" stroke-width="0.500">m</text></svg>
<span class="t" style="left:1916px;top:236.0px;font-size:13.5px;line-height:20px;letter-spacing:-0.058px;transform-origin:0 0;transform:rotate(90deg);">Maven</span>
<svg style="left:1906px;top:660px" width="14" height="76" viewBox="1906 660 14 76">
<rect x="1907.500" y="661.600" width="16" height="72.800" rx="3" fill="#585d6c" stroke="#454a58"/><rect x="1912" y="669.400" width="5.500" height="1.700" fill="#2b2e38"/><rect x="1912" y="671.90" width="5.500" height="1.700" fill="#e0566a"/><rect x="1912" y="674.42" width="5.500" height="1.700" fill="#e16260"/><rect x="1912" y="676.94" width="5.500" height="1.700" fill="#e36f56"/><rect x="1912" y="679.46" width="5.500" height="1.700" fill="#e57c4c"/><rect x="1912" y="681.98" width="5.500" height="1.700" fill="#e78942"/><rect x="1912" y="684.50" width="5.500" height="1.700" fill="#e89741"/><rect x="1912" y="687.02" width="5.500" height="1.700" fill="#e8a642"/><rect x="1912" y="689.54" width="5.500" height="1.700" fill="#e8b444"/><rect x="1912" y="692.06" width="5.500" height="1.700" fill="#e8c345"/><rect x="1912" y="694.58" width="5.500" height="1.700" fill="#e8d147"/><rect x="1912" y="697.10" width="5.500" height="1.700" fill="#ded74a"/><rect x="1912" y="699.62" width="5.500" height="1.700" fill="#ccd750"/><rect x="1912" y="702.14" width="5.500" height="1.700" fill="#bbd755"/><rect x="1912" y="704.66" width="5.500" height="1.700" fill="#a9d65a"/><rect x="1912" y="707.18" width="5.500" height="1.700" fill="#98d660"/><rect x="1912" y="709.70" width="5.500" height="1.700" fill="#87d668"/><rect x="1912" y="712.22" width="5.500" height="1.700" fill="#7ad676"/><rect x="1912" y="714.74" width="5.500" height="1.700" fill="#6dd685"/><rect x="1912" y="717.26" width="5.500" height="1.700" fill="#60d694"/><rect x="1912" y="719.78" width="5.500" height="1.700" fill="#52d6a2"/><rect x="1912" y="722.30" width="5.500" height="1.700" fill="#45d6b1"/><rect x="1912" y="724.82" width="5.500" height="1.700" fill="#38d6c0"/></svg>
<!-- bottom tool window bar -->
<span class="t" style="left:63px;top:973.4px;font-size:14.3px;line-height:20px;letter-spacing:-0.125px;">Version Control</span>
<span class="t" style="left:206px;top:973.4px;font-size:14.3px;line-height:20px;transform-origin:0 50%;transform:scaleX(0.8958);">Run</span>
<span class="t" style="left:274.5px;top:973.4px;font-size:14.3px;line-height:20px;transform-origin:0 50%;transform:scaleX(0.9501);">TODO</span>
<span class="t" style="left:360px;top:973.4px;font-size:14.3px;line-height:20px;transform-origin:0 50%;transform:scaleX(0.9439);">Problems</span>
<span class="t" style="left:465px;top:973.4px;font-size:14.3px;line-height:20px;letter-spacing:-0.29px;">Terminal</span>
<span class="t" style="left:564px;top:973.4px;font-size:14.3px;line-height:20px;transform-origin:0 50%;transform:scaleX(0.9119);">Services</span>
<span class="t" style="left:659px;top:973.4px;font-size:14.3px;line-height:20px;transform-origin:0 50%;transform:scaleX(0.9435);">Build</span>
<span class="t" style="left:736.5px;top:973.4px;font-size:14.3px;line-height:20px;transform-origin:0 50%;transform:scaleX(0.9352);">Dependencies</span>
<svg style="left:43px;top:974px" width="12" height="16" viewBox="43 974 12 16" fill="none" stroke="#6e6e6e" stroke-width="1.700">
<path d="M46 976.500v11M46 984.300c5 0 6.300-1.800 6.300-5.500"/><circle cx="46" cy="976.500" r="2" fill="#6e6e6e" stroke="none"/><circle cx="46" cy="987.600" r="2" fill="#6e6e6e" stroke="none"/><circle cx="52.300" cy="978.700" r="2" fill="#6e6e6e" stroke="none"/></svg>
<svg style="left:187.300px;top:976.300px" width="10" height="12" viewBox="0 0 10 12"><path d="M0 0l10 6-10 6z" fill="#6e6e6e"/></svg>
<svg style="left:256px;top:976px" width="13" height="12" viewBox="0 0 13 12" fill="#6e6e6e">
<rect x="0" y="0.400" width="2.300" height="2.300"/><rect x="3.900" y="0.400" width="8.800" height="2.300"/><rect x="0" y="4.500" width="2.300" height="2.300"/><rect x="3.900" y="4.500" width="8.800" height="2.300"/><rect x="0" y="8.600" width="2.300" height="2.300"/><rect x="3.900" y="8.600" width="8.800" height="2.300"/></svg>
<svg style="left:340.300px;top:974.700px" width="13" height="13" viewBox="0 0 13 13"><circle cx="6.500" cy="6.500" r="6.500" fill="#6e6e6e"/><rect x="5.500" y="2.500" width="2" height="5" fill="#f2f2f2"/><rect x="5.500" y="8.700" width="2" height="2" fill="#f2f2f2"/></svg>
<svg style="left:445px;top:974.700px" width="14" height="13" viewBox="0 0 14 13"><rect width="14" height="13" fill="#6e6e6e"/><path d="M2.500 3l3.500 3-3.500 3" fill="none" stroke="#f2f2f2" stroke-width="1.300"/><rect x="7" y="9" width="4.500" height="1.300" fill="#f2f2f2"/></svg>
<svg style="left:542.500px;top:975px" width="15" height="14" viewBox="0 0 15 14"><path d="M4 0h7l4 7-4 7h-7l-4-7z" fill="#6e6e6e"/><path d="M5.500 3.500l5.500 3.500-5.500 3.500z" fill="#f2f2f2"/></svg>
<svg style="left:637px;top:974px" width="17" height="16" viewBox="637 974 17 16" fill="#6e6e6e"><g transform="translate(637.300 974.300) scale(.830) translate(-1476 -45.300)">
<path d="M1476 52.200l7-6.900h4.200l-8.700 9.500z"/><path d="M1481.300 51.200l2.700-2.700 11 11.200-3 2.800z"/></g></svg>
<svg style="left:715px;top:974px" width="15" height="16" viewBox="0 0 15 16" fill="#6e6e6e"><path d="M7.500 0l7.500 4-7.500 4-7.500-4z"/><path d="M1.800 6.800l5.700 3 5.700-3 1.800 1-7.500 4-7.500-4z"/><path d="M1.800 10.600l5.700 3 5.700-3 1.800 1-7.500 4-7.500-4z"/></svg>
<!-- status bar -->
<svg style="left:7.500px;top:1000px" width="15" height="15" viewBox="0 0 15 15" fill="none" stroke="#6e6e6e" stroke-width="1.200"><rect x="3.600" y="0.600" width="10.800" height="10.800"/><path d="M0.600 3.500v10.900h10.900"/></svg>
<span class="t" style="left:34px;top:997.5px;font-size:15.0px;line-height:20px;letter-spacing:0.463px;">Tests passed: 2 (4 minutes ago)</span>
<span class="t" style="left:1659.4px;top:997.5px;font-size:15.0px;line-height:20px;letter-spacing:0.132px;">12:1</span>
<span class="t" style="left:1705px;top:997.5px;font-size:15.0px;line-height:20px;transform-origin:0 50%;transform:scaleX(0.919);">CRLF</span>
<span class="t" style="left:1756px;top:997.5px;font-size:15.0px;line-height:20px;letter-spacing:0.125px;">UTF-8</span>
<span class="t" style="left:1813.8px;top:997.5px;font-size:15px;line-height:20px;letter-spacing:.6px">4 spaces</span>
<svg style="left:1890px;top:999px" width="16" height="16" viewBox="1890 999 16 16"><path d="M1890.500 1002.500c1.500-2.300 6.300-2.300 6.300 1.500v3.500" fill="none" stroke="#6e6e6e" stroke-width="1.600"/><rect x="1894.200" y="1007.100" width="9.600" height="6.800" fill="#6e6e6e"/></svg>
<div class="abs" style="left:1830px;top:993px;width:63px;height:27px;background:#fff"></div>
<div class="abs" style="left:1835px;top:994.500px;width:2px;height:26px;background:repeating-linear-gradient(to bottom,#d2d2d2 0,#d2d2d2 2px,transparent 2px,transparent 5.100px)"></div>
<svg style="left:1843px;top:995px" width="25" height="24" viewBox="1843 995 25 24">
<g transform="rotate(-16 1855.200 1007)"><rect x="1846.400" y="998.200" width="17.600" height="17.600" rx="2.200" fill="#ff4a0a"/>
<text x="1855.200" y="1013.300" text-anchor="middle" font-family="Liberation Sans,sans-serif" font-weight="bold" font-size="17.500" fill="#fff" transform="translate(1855.200 0) scale(1.180 1) translate(-1855.200 0)">S</text></g></svg>
<svg style="left:1876px;top:996px" width="14" height="22" viewBox="1876 996 14 22" fill="none" stroke-width="1.700"><rect x="1878.400" y="997.800" width="8.800" height="4.400" rx="2" stroke="#7d8ab8"/><path d="M1878.600 1011v4h8.600v-4" stroke="#243266"/></svg>
<!-- red annotation: ellipse + arrow -->
<svg style="left:0;top:0" width="1920" height="1020" viewBox="0 0 1920 1020">
<ellipse cx="485" cy="983.700" rx="52.500" ry="19.800" fill="none" stroke="#e4202a" stroke-width="2"/>
<path d="M659.300 869.800L527 955" stroke="#ed1c24" stroke-width="5.200" stroke-linecap="round" fill="none"/>
<path d="M509.800 966.300L523.800 946.500L527.500 955.500L534.500 963.300z" fill="#ed1c24"/></svg>
</body></html>
